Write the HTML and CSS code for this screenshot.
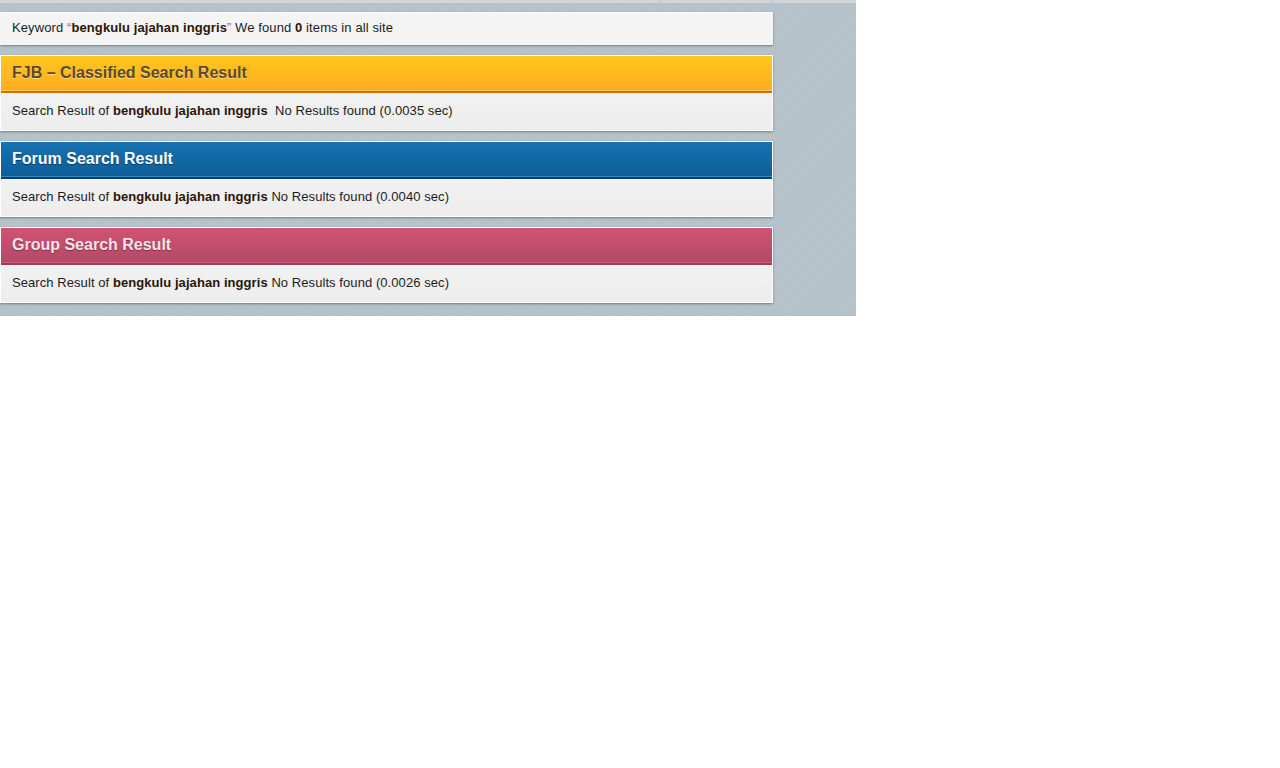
FILE: index.html
```html
<!DOCTYPE html>
<html>
<head>
<meta charset="utf-8">
<link rel="stylesheet" href="styles.css">
</head>
<body>
<div class="page">
  <div class="topstrip"><span class="seg seg1"></span><span class="seg seg2"></span><span class="seg seg3"></span></div>
  <div class="content">
    <div class="keyword">Keyword <span class="q">“</span><b>bengkulu jajahan inggris</b><span class="q">”</span> We found <b>0</b> items in all site</div>
    <div class="panel fjb">
      <div class="head">FJB – Classified Search Result</div>
      <div class="body">Search Result of <b>bengkulu jajahan inggris</b>&nbsp; No Results found (0.0035 sec)</div>
    </div>
    <div class="panel forum">
      <div class="head">Forum Search Result</div>
      <div class="body">Search Result of <b>bengkulu jajahan inggris</b> No Results found (0.0040 sec)</div>
    </div>
    <div class="panel group">
      <div class="head">Group Search Result</div>
      <div class="body">Search Result of <b>bengkulu jajahan inggris</b> No Results found (0.0026 sec)</div>
    </div>
  </div>
</div>
</body>
</html>
```
FILE: styles.css
```css
html, body {
  margin: 0;
  padding: 0;
  background: #ffffff;
}
.page {
  width: 856px;
  height: 316px;
  background-color: #b5c1c9;
  background-image: repeating-linear-gradient(135deg, rgba(255,255,255,0.06) 0 1px, rgba(0,0,0,0) 1px 3px);
  font-family: "Liberation Sans", Arial, sans-serif;
  font-size: 13px;
  color: #1c1c1c;
}
.topstrip {
  height: 3px;
  display: flex;
  background: #d3d6d8;
}
.seg { height: 3px; display: block; }
.seg1 { width: 659px; border-right: 1px solid #bfc3c6; }
.seg2 { width: 112px; border-right: 1px solid #bfc3c6; }
.seg3 { flex: 1; }
.content {
  width: 773px;
  padding-top: 9px;
  display: flex;
  flex-direction: column;
  gap: 10px;
}
.keyword {
  height: 33px;
  box-sizing: border-box;
  background: #f4f4f4;
  border-top: 1px solid #fbfbfb;
  box-shadow: 0 1px 2px rgba(60,70,80,0.55);
  padding: 7px 12px 0 12px;
  line-height: 15px;
  letter-spacing: 0.1px;
}
.keyword b, .body b { color: #2a1608; }
.keyword .q { color: #a8682a; }
.panel {
  border: 1px solid #ffffff;
  box-shadow: 0 1px 2px rgba(60,70,80,0.55);
  background: #efefef;
}
.head {
  height: 35px;
  box-sizing: border-box;
  padding: 8px 11px 0 11px;
  font-size: 16px;
  font-weight: bold;
  line-height: 18px;
}
.body {
  height: 39px;
  box-sizing: border-box;
  padding: 10px 11px 0 11px;
  line-height: 15px;
  letter-spacing: 0.07px;
  background: linear-gradient(#f1f1f1, #ededed);
}
.fjb .head {
  background: linear-gradient(#ffc71d, #ffad20);
  color: #5a4a30;
  text-shadow: 0 1px 0 rgba(255,240,180,0.6);
  border-bottom: 1px solid #ffc452;
}
.fjb .body { border-top: 2px solid #c8720c; }
.forum .head {
  background: linear-gradient(#1672b2, #0f5e98);
  color: #ffffff;
  text-shadow: 0 1px 1px rgba(0,30,60,0.6);
  border-bottom: 1px solid #3a85bb;
}
.forum .body { border-top: 2px solid #0c3f66; }
.group .head {
  background: linear-gradient(#d05376, #b24a66);
  color: #f6e3ec;
  text-shadow: 0 1px 1px rgba(80,10,30,0.5);
  border-bottom: 1px solid #c4637c;
}
.group .body { border-top: 2px solid #9e3c58; }
```
